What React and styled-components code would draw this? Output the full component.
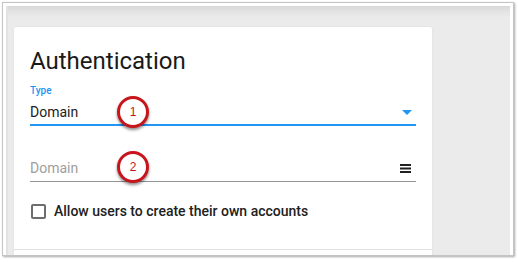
import React from 'react';
import styled, { createGlobalStyle } from 'styled-components';

const GlobalStyle = createGlobalStyle`
  html, body {
    margin: 0;
    padding: 0;
    background: #ffffff;
  }
  body {
    font-family: Roboto, "Liberation Sans", sans-serif;
  }
`;

const COLORS = {
  blue: '#2196f3',
  text: '#212121',
  hint: '#9e9e9e',
  line: '#949494',
  badge: '#c8141b',
};

const Shot = styled.div`
  width: 518px;
  height: 262px;
  padding: 2px;
  box-sizing: border-box;
`;

const Frame = styled.div`
  height: 254px;
  width: 512px;
  box-sizing: border-box;
  border: 1px solid #c4c4c4;
  box-shadow: 1px 1px 2px rgba(0, 0, 0, 0.35);
  padding: 3px 3px 0 3px;
  background: #ffffff;
  overflow: hidden;
`;

const Canvas = styled.div`
  height: 100%;
  display: flex;
  align-items: flex-start;
  padding: 21px 0 0 6px;
  box-sizing: border-box;
  background: linear-gradient(#d8d8d8 0px, #e4e4e4 6px, #ebebeb 12px, #ebebeb 100%);
  border-left: 2px solid #e2e2e2;
`;

const Card = styled.section`
  width: 418px;
  height: 240px;
  background: #ffffff;
  border-radius: 2px 2px 0 0;
  box-shadow: 0 0 2px rgba(0, 0, 0, 0.08);
  display: flex;
  flex-direction: column;
`;

const Body = styled.div`
  padding: 20px 16px 0 16px;
  display: flex;
  flex-direction: column;
`;

const Title = styled.h1`
  margin: 0;
  font-size: 24px;
  line-height: 28px;
  font-weight: 400;
  color: #1a1a1a;
`;

const Field = styled.div`
  position: relative;
  margin-top: ${({ gap }) => gap}px;
`;

const Label = styled.div`
  font-size: 10px;
  line-height: 12px;
  font-weight: 500;
  color: ${COLORS.blue};
  margin-bottom: 5px;
`;

const Input = styled.div`
  display: flex;
  align-items: center;
  justify-content: space-between;
  font-size: 14px;
  line-height: 20px;
  color: ${({ placeholder }) => (placeholder ? COLORS.hint : COLORS.text)};
  padding-bottom: ${({ active }) => (active ? 2 : 3)}px;
  border-bottom: ${({ active }) => (active ? `2px solid ${COLORS.blue}` : `1px solid ${COLORS.line}`)};
`;

const Caret = styled.span`
  width: 0;
  height: 0;
  margin-right: 4px;
  border-left: 5px solid transparent;
  border-right: 5px solid transparent;
  border-top: 5px solid ${COLORS.blue};
`;

const Badge = styled.span`
  position: absolute;
  left: 87px;
  top: ${({ top }) => top}px;
  width: 32px;
  height: 32px;
  box-sizing: border-box;
  border: 3px solid ${COLORS.badge};
  border-radius: 50%;
  background: #ffffff;
  box-shadow: 0 2px 3px rgba(0, 0, 0, 0.45);
  display: flex;
  align-items: center;
  justify-content: center;
  font-family: "Liberation Sans", Arial, sans-serif;
  font-size: 12px;
  color: ${COLORS.badge};
`;

const CheckRow = styled.label`
  display: flex;
  align-items: center;
  gap: 8px;
  margin-top: 19px;
  height: 20px;
  font-size: 14px;
  font-weight: 500;
  color: ${COLORS.text};
`;

const Box = styled.span`
  width: 15px;
  height: 15px;
  margin-left: 1px;
  box-sizing: border-box;
  border: 2px solid #6e6e6e;
  border-radius: 2px;
`;

const Divider = styled.div`
  margin-top: 28px;
  border-top: 1px solid #e0e0e0;
`;

const MenuIcon = () => (
  <svg width="11" height="9" viewBox="0 0 11 9" style={{ marginRight: 5 }}>
    <rect x="0" y="0" width="11" height="2" fill="#212121" />
    <rect x="0" y="3.5" width="11" height="2" fill="#212121" />
    <rect x="0" y="7" width="11" height="2" fill="#212121" />
  </svg>
);

export default function App() {
  return (
    <>
      <GlobalStyle />
      <Shot>
        <Frame>
          <Canvas>
            <Card>
              <Body>
                <Title>Authentication</Title>
                <Field gap={10}>
                  <Label>Type</Label>
                  <Input active>
                    <span>Domain</span>
                    <Caret />
                  </Input>
                  <Badge top={11}>1</Badge>
                </Field>
                <Field gap={32}>
                  <Input placeholder="true">
                    <span>Domain</span>
                    <MenuIcon />
                  </Input>
                  <Badge top={-7}>2</Badge>
                </Field>
                <CheckRow>
                  <Box />
                  Allow users to create their own accounts
                </CheckRow>
              </Body>
              <Divider />
            </Card>
          </Canvas>
        </Frame>
      </Shot>
    </>
  );
}
